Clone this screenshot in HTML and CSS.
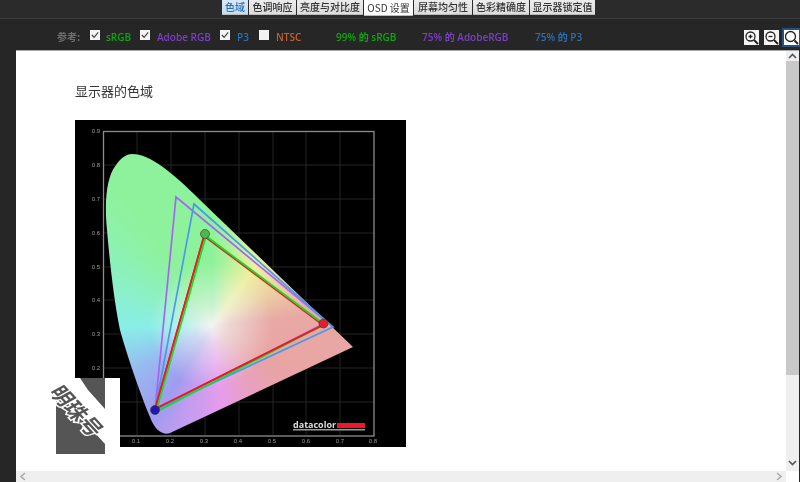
FILE: index.html
```html
<!DOCTYPE html>
<html lang="zh">
<head>
<meta charset="utf-8">
<title>显示器的色域</title>
<link rel="stylesheet" href="styles.css">
</head>
<body>
<div class="app">
  <nav class="tabs">
    <span class="tab tab-cur w26">色域</span>
    <span class="tab w47">色调响应</span>
    <span class="tab w66">亮度与对比度</span>
    <span class="tab tab-on w49">OSD 设置</span>
    <span class="tab w58">屏幕均匀性</span>
    <span class="tab w56">色彩精确度</span>
    <span class="tab w65">显示器锁定值</span>
  </nav>
  <div class="toolbar">
    <span class="ref">参考:</span>
    <span class="box"><svg viewBox="0 0 11 11"><path d="M2 5.500l2.500 2.500L9 2.500" class="tick"/></svg></span>
    <span class="lab green l-srgb">sRGB</span>
    <span class="box"><svg viewBox="0 0 11 11"><path d="M2 5.500l2.500 2.500L9 2.500" class="tick"/></svg></span>
    <span class="lab purple l-adobe">Adobe RGB</span>
    <span class="box"><svg viewBox="0 0 11 11"><path d="M2 5.500l2.500 2.500L9 2.500" class="tick"/></svg></span>
    <span class="lab blue l-p3">P3</span>
    <span class="box"></span>
    <span class="lab orange l-ntsc">NTSC</span>
    <span class="lab green s1">99% 的 sRGB</span>
    <span class="lab purple s2">75% 的 AdobeRGB</span>
    <span class="lab blue s3">75% 的 P3</span>
    <span class="zooms">
      <span class="zbtn"><svg viewBox="0 0 15 15"><circle cx="6.500" cy="6.500" r="4.500" class="lens"/><path d="M10 10l4 4" class="handle"/><path d="M4.500 6.500h4M6.500 4.500v4" class="sign"/></svg></span>
      <span class="zbtn"><svg viewBox="0 0 15 15"><circle cx="6.500" cy="6.500" r="4.500" class="lens"/><path d="M10 10l4 4" class="handle"/><path d="M4.500 6.500h4" class="sign"/></svg></span>
      <span class="zbtn zbtn-on"><svg viewBox="0 0 15 15"><circle cx="6.500" cy="6.500" r="5" class="lens"/><path d="M10.500 10.500l3.500 3.500" class="handle"/></svg></span>
    </span>
  </div>
  <div class="main">
    <div class="pane">
      <div class="view">
        <div class="page">
          <h1 class="title">显示器的色域</h1>
          <svg class="chart" viewBox="75 120 331 327">
            <defs>
              <clipPath id="hs"><path d="M163 433C157 431 153 425 150 417C140 393 127 355 120 330C114 300 110 265 107 230C104 200 107 176 116 165C121 158 126 154 132 154C150 154 172 172 200 200L353 347L170 433C168 434 165 434 163 433Z"/></clipPath>
              <radialGradient id="gWhite" gradientUnits="userSpaceOnUse" cx="211" cy="325" r="62"><stop offset="0" stop-color="#f2f4f2" stop-opacity="1"/><stop offset=".3" stop-color="#f2f4f2" stop-opacity=".6"/><stop offset="1" stop-color="#f2f4f2" stop-opacity="0"/></radialGradient>
            </defs>
            <rect x="75" y="120" width="331" height="327" class="bg"/>
            <path d="M137 132V435M171 132V435M205 132V435M239 132V435M273 132V435M306 132V435M340 132V435M104 165H374M104 199H374M104 233H374M104 267H374M104 300H374M104 334H374M104 368H374M104 402H374" class="grid"/>
            <rect x="103.500" y="131.500" width="270.500" height="304.500" class="frame"/>
            <g clip-path="url(#hs)">
              <foreignObject x="100" y="150" width="260" height="290"><div class="conic"></div></foreignObject>
              <rect x="100" y="150" width="260" height="290" fill="url(#gWhite)"/>
            </g>
            <path d="M176 197L327 322L155 410Z" class="tri t-adobe"/>
            <path d="M194 204L333 327L155 410Z" class="tri t-p3"/>
            <path d="M204 236L323 325L155 409Z" class="tri t-red"/>
            <path d="M206 236L321 322M321 326L156 412L206 236" class="tri t-green"/>
            <path d="M204 236L155 409L323 325" class="tri t-red"/>
            <circle cx="205" cy="234" r="4.500" class="dot d-g"/>
            <circle cx="323.500" cy="323.500" r="4.500" class="dot d-r"/>
            <circle cx="155" cy="410" r="4.500" class="dot d-b"/>
            <g class="axis">
              <text x="96" y="133">0.9</text><text x="96" y="167">0.8</text><text x="96" y="201">0.7</text><text x="96" y="235">0.6</text><text x="96" y="269">0.5</text><text x="96" y="302">0.4</text><text x="96" y="336">0.3</text><text x="96" y="370">0.2</text>
              <text x="136" y="443">0.1</text><text x="170" y="443">0.2</text><text x="204" y="443">0.3</text><text x="238" y="443">0.4</text><text x="272" y="443">0.5</text><text x="306" y="443">0.6</text><text x="340" y="443">0.7</text><text x="373" y="443">0.8</text>
            </g>
            <text x="293" y="428" class="brand">datacolor</text>
            <rect x="337" y="423" width="28" height="5" class="brandbar"/>
            <rect x="293" y="429" width="72" height="1.500" class="brandline"/>
          </svg>
          <svg class="mark" viewBox="0 0 64 76">
            <rect x="19" y="0" width="45" height="69" class="mark-white"/>
            <path d="M0 12L49 66V76H0Z M24 0H49V31L32 12Z" class="mark-gray"/>
            <text x="0" y="0" transform="translate(-8 14) rotate(47) skewX(-14)" class="mark-text">明珠号</text>
          </svg>
        </div>
        <div class="vbar">
          <svg class="arrow" viewBox="0 0 13 10"><path d="M3 7l3.500-3.500L10 7" class="chev"/></svg>
          <div class="thumb"></div>
          <svg class="arrow arrow-end" viewBox="0 0 13 10"><path d="M3 3l3.500 3.500L10 3" class="chev"/></svg>
        </div>
      </div>
      <div class="hrow">
        <div class="hbar">
          <svg class="harrow" viewBox="0 0 10 11"><path d="M7 2L3 5.500L7 9" class="chev light"/></svg>
          <svg class="harrow" viewBox="0 0 10 11"><path d="M3 2l4 3.500L3 9" class="chev light"/></svg>
        </div>
        <div class="corner"></div>
      </div>
    </div>
  </div>
</div>
</body>
</html>
```
FILE: styles.css
```css
* { box-sizing: border-box; }
html, body { margin: 0; padding: 0; }
body { width: 800px; height: 482px; overflow: hidden; background: #262626; font-family: "Open Sans", "Noto Sans CJK SC", sans-serif; }
.app { display: flex; flex-direction: column; width: 800px; height: 482px; filter: blur(.35px); }

.tabs { height: 19px; display: flex; padding-left: 222px; background: #2b2b2b; border-bottom: 1px solid #3c3c3c; align-items: flex-start; }
.tab { height: 15px; margin-right: 1px; background: linear-gradient(#ececec, #dcdcdc); color: #333; font-size: 10px; font-weight: 500; line-height: 13px; text-align: center; white-space: nowrap; font-family: "Noto Sans CJK SC", sans-serif; border-bottom: 1px solid #bbb; }
.tab-cur { background: linear-gradient(#d8e8f8, #c4dcf2); color: #2a6fb5; }
.tab-on { background: #fff; height: 16px; line-height: 15px; font-weight: 400; }
.w26 { width: 26px; } .w47 { width: 47px; } .w66 { width: 66px; } .w49 { width: 49px; } .w58 { width: 58px; } .w56 { width: 56px; } .w65 { width: 65px; margin-right: 0; }

.toolbar { height: 31px; display: flex; align-items: center; padding-left: 57px; padding-top: 4px; background: #262626; font-size: 10px; font-weight: 600; font-family: "Open Sans", "Noto Sans CJK SC", sans-serif; white-space: nowrap; }
.ref { width: 33px; color: #6f6f6f; font-family: "Noto Sans CJK SC", sans-serif; }
.box { width: 10px; height: 10px; background: #f4f4f4; margin-top: -3px; display: block; flex: none; }
.box svg { display: block; width: 10px; height: 10px; }
.tick { fill: none; stroke: #444; stroke-width: 1.300; }
.lab { display: block; flex: none; }
.green { color: #0ca80c; } .purple { color: #7b3fc4; } .blue { color: #2c6fb4; } .orange { color: #c0622e; }
.l-srgb { width: 34px; margin-left: 6px; } .l-adobe { width: 63px; margin-left: 7px; } .l-p3 { width: 22px; margin-left: 7px; }
.l-ntsc { width: 60px; margin-left: 7px; } .s1 { width: 86px; } .s2 { width: 113px; } .s3 { width: 209px; }
.zooms { display: flex; gap: 5px; }
.zbtn { width: 15px; height: 15px; background: #f4f4f4; display: block; margin-top: 2px; }
.zbtn svg { display: block; width: 15px; height: 15px; }
.zbtn-on { background: #fff; box-shadow: 0 0 0 2px #24527c; }
.lens { fill: #fff; stroke: #222; stroke-width: 1.300; }
.handle { stroke: #222; stroke-width: 2; fill: none; }
.sign { stroke: #222; stroke-width: 1.300; fill: none; }

.main { flex: 1; min-height: 0; padding-left: 16px; padding-right: 1px; display: flex; }
.pane { flex: 1; display: flex; flex-direction: column; background: #fff; border-top: 1px solid #aaa; }
.view { flex: 1; min-height: 0; display: flex; }
.page { flex: 1; position: relative; padding: 31px 0 0 59px; }
.title { margin: 0 0 20px; font-weight: 400; font-size: 13px; line-height: 18px; color: #333; font-family: "Noto Sans CJK SC", sans-serif; }
.chart { display: block; width: 331px; height: 327px; }
.bg { fill: #000; }
.grid { stroke: #252525; stroke-width: 1; fill: none; }
.frame { fill: none; stroke: #8c8c8c; stroke-width: 1.300; }
.conic { width: 260px; height: 290px; background: conic-gradient(from 0deg at 113px 175px, #8ef29c 0deg, #b8f29c 15deg, #eef0a0 36deg, #ecd4a4 58deg, #e8a8a4 85deg, #e8a4a4 125deg, #e8a0c0 150deg, #e69cec 175deg, #c09cf0 198deg, #a09cf0 212deg, #98b8f0 238deg, #88eee8 268deg, #8cf0c4 295deg, #8ef29c 325deg, #8ef29c 360deg); }
.tri { fill: none; stroke-width: 1.700; }
.t-adobe { stroke: #a864f0; } .t-p3 { stroke: #4a9ae8; } .t-green { stroke: #10e020; } .t-red { stroke: #f01828; }
.dot { stroke: #333; stroke-width: 1; stroke-opacity: .6; }
.d-g { fill: #4cb84c; } .d-r { fill: #e02030; } .d-b { fill: #2018b0; }
.axis text { fill: #999; font-size: 6px; font-family: "Liberation Sans", sans-serif; text-anchor: middle; }
.brand { fill: #ddd; font-size: 9px; font-weight: 700; font-family: "Open Sans", sans-serif; }
.brandbar { fill: #f01828; }
.brandline { fill: #999; }

.mark { position: absolute; left: 40px; top: 327px; width: 64px; height: 76px; overflow: visible; }
.mark-white { fill: #fff; }
.mark-gray { fill: #555; }
.mark-text { fill: #555; font-size: 21px; font-weight: 700; font-family: "Noto Sans CJK SC", sans-serif; stroke: #fff; stroke-width: 3; paint-order: stroke; }

.vbar { width: 13px; flex: none; background: #efefef; display: flex; flex-direction: column; }
.arrow { display: block; width: 13px; height: 10px; flex: none; }
.thumb { height: 314px; background: #c8c8c8; flex: none; }
.arrow-end { margin-top: auto; margin-bottom: 3px; }
.chev { fill: none; stroke: #555; stroke-width: 1.600; }
.chev.light { stroke: #aaa; }
.hrow { height: 11px; flex: none; display: flex; }
.hbar { flex: 1; background: #efefef; display: flex; justify-content: space-between; padding: 0 2px; }
.harrow { display: block; width: 10px; height: 11px; }
.corner { width: 13px; background: #fff; }
```
